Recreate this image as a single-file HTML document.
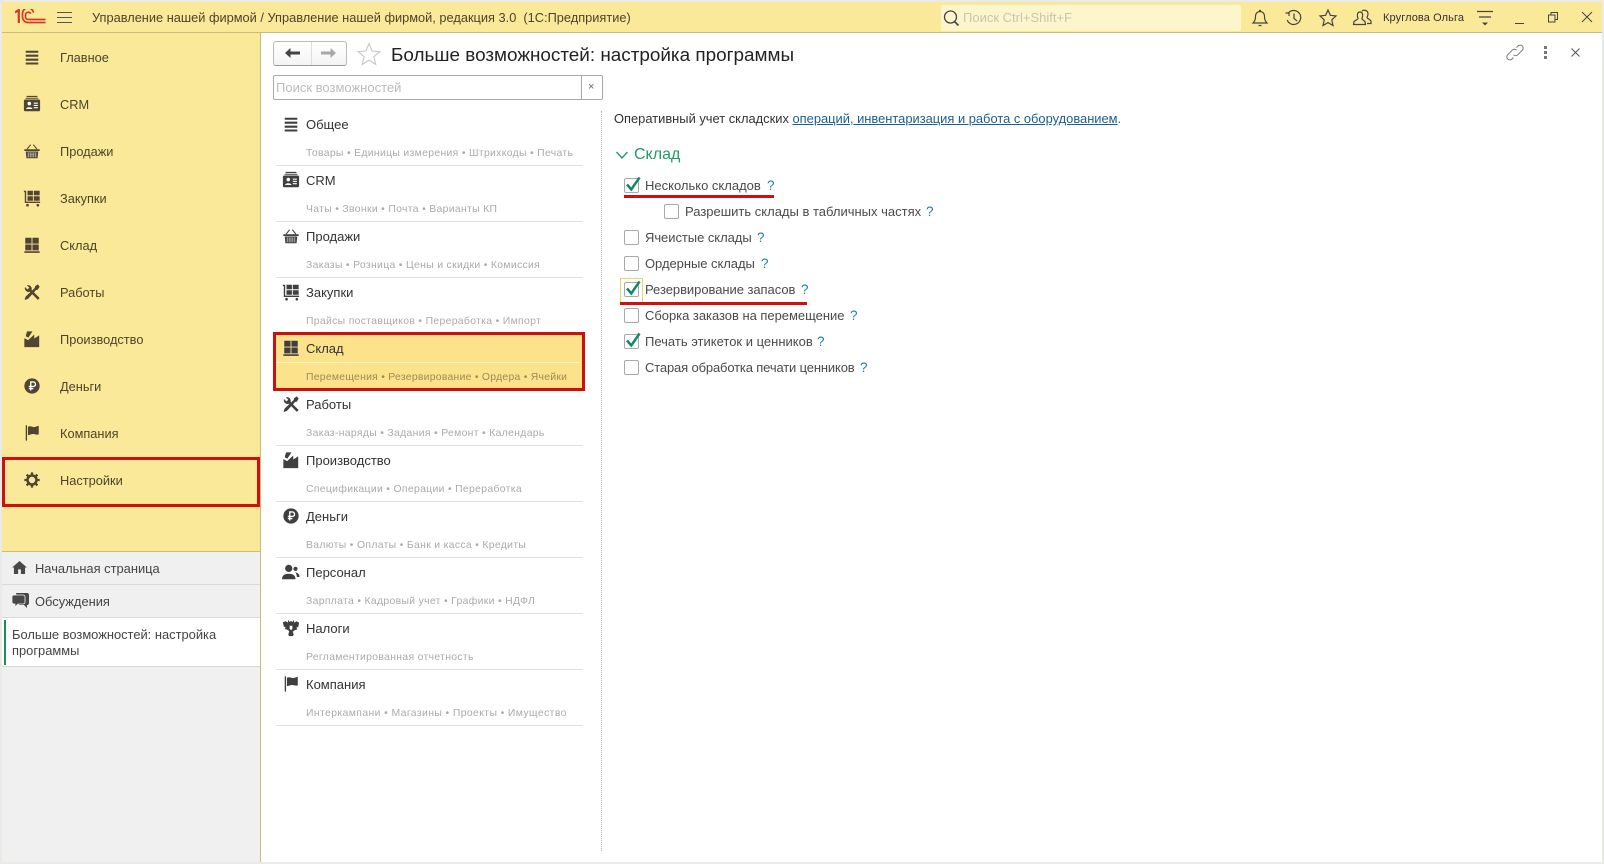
<!DOCTYPE html>
<html lang="ru"><head><meta charset="utf-8"><title>Больше возможностей: настройка программы</title>
<style>
html,body{margin:0;padding:0}
body{width:1604px;height:864px;position:relative;overflow:hidden;background:#fff;font-family:"Liberation Sans","DejaVu Sans",sans-serif;font-size:13px;color:#333;filter:blur(.3px)}
.a{position:absolute}
.t{position:absolute;line-height:0;white-space:nowrap}
svg.i{position:absolute;width:18px;height:18px;margin:1px}
.n{color:#4c4428;font-size:12.8px;left:60px}
.h{font-size:13px;color:#333;left:306px}
.s{font-size:10.4px;color:#aaa;left:306px;letter-spacing:.33px}
.sep{position:absolute;left:276px;width:307px;height:1px;background:#e2e2e2}
.c{position:absolute;left:624px;width:13px;height:13px;border:1px solid #a9a9a9;border-radius:2px;background:#fff}
.l{font-size:13px;color:#4a4a4a;left:645px}
.q{font-size:13.5px;color:#1c7fa6}
</style></head><body>
<svg width="0" height="0" style="position:absolute"><defs>
<symbol id="menu" viewBox="0 0 20 20"><path d="M3 3h14v2.300H3zM3 7.400h14v2.300H3zM3 11.800h14v2.300H3zM3 16.100h14v2.300H3z" fill="currentColor"/></symbol>
<symbol id="crm" viewBox="0 0 20 20"><path d="M4 1h12v1.200H4zM3 3h14v1.200H3z" fill="currentColor"/><path d="M2.500 5h15a1.500 1.500 0 0 1 1.500 1.500v10a1.500 1.500 0 0 1-1.500 1.500h-15A1.500 1.500 0 0 1 1 16.500v-10A1.500 1.500 0 0 1 2.500 5z" fill="currentColor"/><circle cx="7" cy="9.500" r="2" fill="#fff"/><path d="M3.500 15.500c.3-2.500 6.700-2.500 7 0zM12 8.500h4.500v1.200H12zM12 11h4.500v1.200H12zM12 13.500h4.500v1.200H12z" fill="#fff"/></symbol>
<symbol id="cart" viewBox="0 0 20 20"><path d="M1.500 8h17v2h-17zM3 10.500h14l-.8 7.500H3.800z" fill="currentColor"/><path d="M4.500 8l4-5M15.500 8l-4-5" stroke="currentColor" stroke-width="1.200" fill="none"/><path d="M5.800 11.500v5.500M8 11.500v5.500M10 11.500v5.500M12 11.500v5.500M14.200 11.500v5.500" stroke="#fff" stroke-width=".9" fill="none" opacity=".75"/></symbol>
<symbol id="buy" viewBox="0 0 20 20"><path d="M1 2h2.500v12h15.500v1.600H2V3.500H1z" fill="currentColor"/><path d="M5 2h6v5H5zM12 2h6.500v5H12zM5 8h6v5H5zM12 8h6.500v5H12z" fill="currentColor"/><circle cx="5" cy="18" r="1.500" fill="currentColor"/><circle cx="16.500" cy="18" r="1.500" fill="currentColor"/></symbol>
<symbol id="wh" viewBox="0 0 20 20"><path d="M2.500 2h7v6.500h-7zM10.500 2h7v6.500h-7zM2.500 9.500h7V16h-7zM10.500 9.500h7V16h-7zM1.500 17h17v1.800h-17z" fill="currentColor"/></symbol>
<symbol id="work" viewBox="0 0 20 20"><path d="M2.200 4.500L5 7.200 7 5.200 4.300 2.500A4.200 4.200 0 0 1 9.500 7.800L18.500 16.700 16.500 18.700 7.600 9.700A4.200 4.200 0 0 1 2.200 4.500z" fill="currentColor"/><path d="M18.500 4l-2-2.500-3 2-.5 2L3 15l-1.200 3 .7.800 3-1.200 9-9.800 2-.5z" fill="currentColor"/></symbol>
<symbol id="prod" viewBox="0 0 20 20"><path d="M4.500 1.500h6l-4.500 7L3 7z" fill="currentColor"/><path d="M1.500 9l4.200 2.200L12.500 5v4.500L18 6v13H1.500z" fill="currentColor"/></symbol>
<symbol id="rub" viewBox="0 0 20 20"><circle cx="10" cy="10" r="8.500" fill="currentColor"/><path d="M8.600 15V5.500h2.800a2.400 2.400 0 0 1 0 5H6.500M6.500 12.800h5" stroke="#fff" stroke-width="1.500" fill="none"/></symbol>
<symbol id="flag" viewBox="0 0 20 20"><path d="M3 1.500h1.500v17H3z" fill="currentColor"/><path d="M5.500 3c3-1.500 5 .8 7.500.4L17.500 2v9.500c-3 1-5-.8-7.500-.2L5.500 12.500z" fill="currentColor"/></symbol>
<symbol id="gear" viewBox="0 0 20 20"><circle cx="10" cy="10" r="5" fill="none" stroke="currentColor" stroke-width="2.800"/><path d="M10 1.500v3.500M10 15v3.500M1.500 10H5M15 10h3.500M4 4l2.500 2.500M13.500 13.500L16 16M16 4l-2.500 2.500M6.500 13.500L4 16" stroke="currentColor" stroke-width="2.600"/></symbol>
<symbol id="team" viewBox="0 0 20 20"><circle cx="7.500" cy="6" r="4" fill="currentColor"/><path d="M0 18c0-4.500 3.500-6 7.500-6s7.500 1.500 7.500 6z" fill="currentColor"/><circle cx="15" cy="6.500" r="2.300" fill="currentColor"/><path d="M15 10.500c2.500 0 4.500 2 4.500 5h-3c0-2-.6-3.500-1.500-5z" fill="currentColor"/></symbol>
<symbol id="tax" viewBox="0 0 20 20"><path d="M7 1l1.500 2.500L10 2l1.500 1.500L13 1l.5 3L16 2.500l3 1.500-1 5-2 .5 1 2-3 1-2 1.500 1 3.500-1 1.500H8l-1-1.500L8 13.500 6 12l-3-1 1-2-2-.5-1-5 3-1L6.500 4z" fill="currentColor"/><path d="M8.500 7.500h3v3.500L10 12.500 8.500 11z" fill="#fff"/></symbol>
<symbol id="tick" viewBox="0 0 18 18"><path d="M3 8.500l4.300 5L15.500 1.500" fill="none" stroke="#12876a" stroke-width="2.500"/></symbol>
</defs></svg>

<!-- outer frame -->
<div class="a" style="left:0;top:0;width:1604px;height:864px;background:#e8ebe6"></div>
<div class="a" style="left:2px;top:2px;width:1600px;height:860px;background:#fff"></div>

<!-- top bar -->
<div class="a" style="left:2px;top:2px;width:1600px;height:30px;background:#fbe99a;border-bottom:1px solid #c9bb7a"></div>
<svg class="a" style="left:15px;top:9px" width="31" height="15" viewBox="0 0 31 15"><path d="M0 3.500L3.800 1V14" fill="none" stroke="#d4362a" stroke-width="2.200"/><path d="M18.500 3.600A5.500 5.500 0 0 0 7.500 5.500V8A5.500 5.500 0 0 0 13 13.500H30.500" fill="none" stroke="#d4362a" stroke-width="1.700"/><path d="M15.800 4.800A2.800 2.800 0 0 0 10.500 6V7.700A2.800 2.800 0 0 0 13.300 10.500H30.500" fill="none" stroke="#d4362a" stroke-width="1.700"/></svg>
<svg class="a" style="left:57px;top:12px" width="15" height="12" viewBox="0 0 15 12"><path d="M0 .5h15M0 5.500h15M0 10.500h15" stroke="#555" stroke-width="1"/></svg>
<div class="t" style="left:92px;top:18px;font-size:12.8px;color:#4c4428">Управление нашей фирмой / Управление нашей фирмой, редакция 3.0&nbsp; (1С:Предприятие)</div>
<div class="a" style="left:941px;top:5px;width:300px;height:26px;background:#fdf5cc;border-radius:2px"></div>
<svg class="a" style="left:942px;top:9px" width="19" height="19" viewBox="0 0 19 19"><circle cx="8.500" cy="8" r="6" fill="none" stroke="#444" stroke-width="1.300"/><path d="M12.500 12.500l4 4" stroke="#444" stroke-width="1.600"/></svg>
<div class="t" style="left:963px;top:18px;font-size:13px;color:#c9c6ae">Поиск Ctrl+Shift+F</div>
<svg class="a" style="left:1250px;top:8px" width="20" height="20" viewBox="0 0 20 20" fill="none" stroke="#444" stroke-width="1.200"><path d="M3 15h14c-2-2-2.500-3.500-2.500-7a4.500 4.500 0 0 0-9 0c0 3.500-.5 5-2.500 7zM9 2.500h2M8.500 17.500h3"/></svg>
<svg class="a" style="left:1284px;top:8px" width="20" height="20" viewBox="0 0 20 20" fill="none" stroke="#444" stroke-width="1.200"><path d="M4 5.500A7 7 0 1 1 3.200 12M1.500 5h3.500v3M10 5.500V10.500l3 2.500"/></svg>
<svg class="a" style="left:1318px;top:8px" width="20" height="20" viewBox="0 0 20 20" fill="none" stroke="#444" stroke-width="1.200"><path d="M10 2l2.400 5.300 5.600.6-4.200 3.900 1.200 5.700-5-2.900-5 2.900 1.200-5.700L2 7.900l5.600-.6z"/></svg>
<svg class="a" style="left:1352px;top:8px" width="20" height="20" viewBox="0 0 20 20" fill="none" stroke="#444" stroke-width="1.200"><path d="M6 10c-1.200-2-1-6 2-6s3.200 4 2 6c-.5 1 .5 1.800 3 3.500l.5 3H1.500l.5-3c2.500-1.700 4.500-2.500 4-3.500zM10 3.200c1-1.500 6-1.500 6 2.500 0 2-.8 3-1 4 .5 1 3.500 2 4 3.500v2.300h-4"/></svg>
<div class="t" style="left:1383px;top:18px;font-size:11px;color:#333;letter-spacing:.1px">Круглова Ольга</div>
<svg class="a" style="left:1477px;top:10px" width="16" height="17" viewBox="0 0 16 17"><path d="M0 1.500h16M2 7h12" stroke="#444" stroke-width="1.200" fill="none"/><path d="M5 12.500h6l-3 3z" fill="#444"/></svg>
<div class="a" style="left:1515px;top:23px;width:9px;height:1.300px;background:#444"></div>
<svg class="a" style="left:1547px;top:11px" width="12" height="12" viewBox="0 0 12 12" fill="none" stroke="#444"><path d="M1.500 4h6.500v7H1.500zM4 4V1.500h6.500v7H8"/></svg>
<svg class="a" style="left:1581px;top:11px" width="12" height="12" viewBox="0 0 12 12"><path d="M1 1l10 10M11 1L1 11" stroke="#444" stroke-width="1"/></svg>

<!-- sidebar -->
<div class="a" style="left:2px;top:33px;width:258px;height:518px;background:#fbe99a"></div>
<div class="a" style="left:2px;top:551px;width:258px;height:311px;background:#f0f0f0"></div>
<div class="a" style="left:260px;top:33px;width:1px;height:829px;background:#c9bb7a"></div>
<div class="a" style="left:2px;top:551px;width:258px;height:1px;background:#c9bb7a"></div>
<div class="a" style="left:2px;top:584px;width:258px;height:1px;background:#d9d9d9"></div>
<div class="a" style="left:2px;top:617px;width:258px;height:50px;background:#fff;border-top:1px solid #d9d9d9;border-bottom:1px solid #d9d9d9;box-sizing:border-box"></div>
<div class="a" style="left:4px;top:620px;width:2px;height:45px;background:#1d8a5f"></div>
<div class="a" style="left:2px;top:457px;width:258px;height:50px;box-sizing:border-box;border:3px solid #d10f0f"></div>

<svg class="i" style="left:22px;top:47px;color:#4f4532"><use href="#menu"/></svg><div class="t n" style="top:58px">Главное</div>
<svg class="i" style="left:22px;top:94px;color:#4f4532"><use href="#crm"/></svg><div class="t n" style="top:105px">CRM</div>
<svg class="i" style="left:22px;top:141px;color:#4f4532"><use href="#cart"/></svg><div class="t n" style="top:152px">Продажи</div>
<svg class="i" style="left:22px;top:188px;color:#4f4532"><use href="#buy"/></svg><div class="t n" style="top:199px">Закупки</div>
<svg class="i" style="left:22px;top:235px;color:#4f4532"><use href="#wh"/></svg><div class="t n" style="top:246px">Склад</div>
<svg class="i" style="left:22px;top:282px;color:#4f4532"><use href="#work"/></svg><div class="t n" style="top:293px">Работы</div>
<svg class="i" style="left:22px;top:329px;color:#4f4532"><use href="#prod"/></svg><div class="t n" style="top:340px">Производство</div>
<svg class="i" style="left:22px;top:376px;color:#4f4532"><use href="#rub"/></svg><div class="t n" style="top:387px">Деньги</div>
<svg class="i" style="left:22px;top:423px;color:#4f4532"><use href="#flag"/></svg><div class="t n" style="top:434px">Компания</div>
<svg class="i" style="left:22px;top:470px;color:#4f4532"><use href="#gear"/></svg><div class="t n" style="top:481px">Настройки</div>

<svg class="a" style="left:12px;top:561px" width="15" height="13" viewBox="0 0 16 14"><path d="M8 0l8 7h-2v7H9.500V9h-3v5H2V7H0z" fill="#484848"/></svg>
<div class="t" style="left:35px;top:569px;font-size:12.9px;color:#444">Начальная страница</div>
<svg class="a" style="left:12px;top:593px" width="17" height="16" viewBox="0 0 17 16"><path d="M4 0h11a2 2 0 0 1 2 2v8a2 2 0 0 1-2 2v3l-3-3H7z" fill="#484848"/><path d="M2 2h9a2 2 0 0 1 2 2v5a2 2 0 0 1-2 2H6l-3 3v-3H2a2 2 0 0 1-2-2V4a2 2 0 0 1 2-2z" fill="#484848" stroke="#f0f0f0" stroke-width=".8"/></svg>
<div class="t" style="left:35px;top:602px;font-size:12.9px;color:#444">Обсуждения</div>
<div class="t" style="left:12px;top:635px;font-size:12.9px;color:#444">Больше возможностей: настройка</div>
<div class="t" style="left:12px;top:651px;font-size:12.9px;color:#444">программы</div>

<!-- header of form -->
<div class="a" style="left:273px;top:41px;width:72px;height:23px;border:1px solid #bbb;border-bottom-color:#999;border-radius:3px;background:linear-gradient(#fff,#f4f4f4)"></div>
<div class="a" style="left:311px;top:42px;width:1px;height:23px;background:#ddd"></div>
<svg class="a" style="left:285px;top:47px" width="15" height="12" viewBox="0 0 15 12"><path d="M0 6l5.500-5v3.500H15v3H5.500V11z" fill="#444"/></svg>
<svg class="a" style="left:321px;top:47px" width="15" height="12" viewBox="0 0 15 12"><path d="M15 6L9.500 1v3.500H0v3h9.500V11z" fill="#a8a8a8"/></svg>
<svg class="a" style="left:357px;top:42px" width="24" height="24" viewBox="0 0 24 24"><path d="M12 1.500l3 7.500 8 .6-6.200 5.100 2 7.800-6.800-4.300-6.800 4.300 2-7.800L1 9.600 9 9z" fill="#fff" stroke="#c8c8c8" stroke-width="1.100"/></svg>
<div class="t" style="left:391px;top:55.500px;font-size:18.900px;color:#222">Больше возможностей: настройка программы</div>
<svg class="a" style="left:1506px;top:44px" width="18" height="17" viewBox="0 0 18 17" fill="none" stroke="#777" stroke-width="1"><path d="M10.500 3.500l1.500-1.500a3 3 0 0 1 4.300 4.200l-4.500 4.600a3 3 0 0 1-4.300 0"/><path d="M7.500 13.500L6 15a3 3 0 0 1-4.300-4.200l4.500-4.600a3 3 0 0 1 4.300 0"/></svg>
<div class="a" style="left:1544px;top:46px;width:3px;height:3px;background:#777;box-shadow:0 5px 0 #777,0 10px 0 #777"></div>
<svg class="a" style="left:1571px;top:48px" width="9" height="9" viewBox="0 0 9 9"><path d="M.5.500l8 8M8.500.500l-8 8" stroke="#555"/></svg>

<!-- search -->
<div class="a" style="left:273px;top:75px;width:328px;height:23px;border:1px solid #a9a9a9;border-radius:2px;background:#fff"></div>
<div class="a" style="left:581px;top:75px;width:1px;height:25px;background:#a9a9a9"></div>
<div class="t" style="left:276px;top:88px;font-size:13px;color:#bbb">Поиск возможностей</div>
<div class="t" style="left:588px;top:87px;font-size:11px;color:#666">×</div>

<!-- list -->
<div class="a" style="left:275px;top:335px;width:307px;height:53px;background:#fde28c"></div>
<div class="a" style="left:276px;top:362px;width:304px;height:1px;background:#fff3c4"></div>
<div class="a" style="left:273px;top:332px;width:312px;height:59px;box-sizing:border-box;border:3px solid #cc1010"></div>
<div class="sep" style="top:165px"></div><div class="sep" style="top:221px"></div><div class="sep" style="top:277px"></div>
<div class="sep" style="top:445px"></div><div class="sep" style="top:501px"></div><div class="sep" style="top:557px"></div><div class="sep" style="top:613px"></div><div class="sep" style="top:669px"></div><div class="sep" style="top:725px"></div>

<svg class="i" style="left:281px;top:114px;color:#3f3f3f"><use href="#menu"/></svg><div class="t h" style="top:125px">Общее</div><div class="t s" style="top:153.500px">Товары • Единицы измерения • Штрихкоды • Печать</div>
<svg class="i" style="left:281px;top:170px;color:#3f3f3f"><use href="#crm"/></svg><div class="t h" style="top:181px">CRM</div><div class="t s" style="top:209.500px">Чаты • Звонки • Почта • Варианты КП</div>
<svg class="i" style="left:281px;top:226px;color:#3f3f3f"><use href="#cart"/></svg><div class="t h" style="top:237px">Продажи</div><div class="t s" style="top:265.500px">Заказы • Розница • Цены и скидки • Комиссия</div>
<svg class="i" style="left:281px;top:282px;color:#3f3f3f"><use href="#buy"/></svg><div class="t h" style="top:293px">Закупки</div><div class="t s" style="top:321.500px">Прайсы поставщиков • Переработка • Импорт</div>
<svg class="i" style="left:281px;top:338px;color:#3f3f3f"><use href="#wh"/></svg><div class="t h" style="top:349px">Склад</div><div class="t s" style="top:377.500px;color:#9c8a55;letter-spacing:.27px">Перемещения • Резервирование • Ордера • Ячейки</div>
<svg class="i" style="left:281px;top:394px;color:#3f3f3f"><use href="#work"/></svg><div class="t h" style="top:405px">Работы</div><div class="t s" style="top:433.500px">Заказ-наряды • Задания • Ремонт • Календарь</div>
<svg class="i" style="left:281px;top:450px;color:#3f3f3f"><use href="#prod"/></svg><div class="t h" style="top:461px">Производство</div><div class="t s" style="top:489.500px">Спецификации • Операции • Переработка</div>
<svg class="i" style="left:281px;top:506px;color:#3f3f3f"><use href="#rub"/></svg><div class="t h" style="top:517px">Деньги</div><div class="t s" style="top:545.500px">Валюты • Оплаты • Банк и касса • Кредиты</div>
<svg class="i" style="left:281px;top:562px;color:#3f3f3f"><use href="#team"/></svg><div class="t h" style="top:573px">Персонал</div><div class="t s" style="top:601.500px">Зарплата • Кадровый учет • Графики • НДФЛ</div>
<svg class="i" style="left:281px;top:618px;color:#3f3f3f"><use href="#tax"/></svg><div class="t h" style="top:629px">Налоги</div><div class="t s" style="top:657.500px">Регламентированная отчетность</div>
<svg class="i" style="left:281px;top:674px;color:#3f3f3f"><use href="#flag"/></svg><div class="t h" style="top:685px">Компания</div><div class="t s" style="top:713.500px;letter-spacing:.4px">Интеркампани • Магазины • Проекты • Имущество</div>

<!-- dotted -->
<div class="a" style="left:601px;top:111px;width:0;height:740px;border-left:1px dotted #b5b5b5"></div>

<!-- content -->
<div class="t" style="left:614px;top:119px;font-size:12.9px;color:#333">Оперативный учет складских <span style="color:#1b5e94;text-decoration:underline">операций, инвентаризация и работа с оборудованием</span><span style="color:#1b5e94">.</span></div>
<svg class="a" style="left:615px;top:151px" width="14" height="9" viewBox="0 0 14 9"><path d="M1.500 1l5.500 6 5.500-6" fill="none" stroke="#1f9a68" stroke-width="1.300"/></svg>
<div class="t" style="left:634px;top:154.500px;font-size:16px;color:#1f9a68">Склад</div>

<div class="a" style="left:620px;top:278px;width:21px;height:23px;border:1px solid #e9d46a"></div>
<div class="a" style="left:624px;top:195px;width:150px;height:2.500px;background:#d00f0f"></div>
<div class="a" style="left:620px;top:302px;width:187px;height:2.500px;background:#d00f0f"></div>

<div class="c" style="top:178px"></div><svg class="a" style="left:624px;top:176px" width="18" height="18"><use href="#tick"/></svg>
<div class="t l" style="top:186px">Несколько складов</div><div class="t q" style="left:767px;top:186px">?</div>
<div class="c" style="left:664px;top:204px"></div>
<div class="t l" style="left:685px;top:212px">Разрешить склады в табличных частях</div><div class="t q" style="left:926px;top:212px">?</div>
<div class="c" style="top:230px"></div>
<div class="t l" style="top:238px;letter-spacing:-.05px">Ячеистые склады</div><div class="t q" style="left:757px;top:238px">?</div>
<div class="c" style="top:256px"></div>
<div class="t l" style="top:264px;letter-spacing:-.05px">Ордерные склады</div><div class="t q" style="left:761px;top:264px">?</div>
<div class="c" style="top:282px"></div><svg class="a" style="left:624px;top:280px" width="18" height="18"><use href="#tick"/></svg>
<div class="t l" style="top:290px;letter-spacing:-.05px">Резервирование запасов</div><div class="t q" style="left:801px;top:290px">?</div>
<div class="c" style="top:308px"></div>
<div class="t l" style="top:316px;letter-spacing:-.03px">Сборка заказов на перемещение</div><div class="t q" style="left:850px;top:316px">?</div>
<div class="c" style="top:334px"></div><svg class="a" style="left:624px;top:332px" width="18" height="18"><use href="#tick"/></svg>
<div class="t l" style="top:342px">Печать этикеток и ценников</div><div class="t q" style="left:817px;top:342px">?</div>
<div class="c" style="top:360px"></div>
<div class="t l" style="top:368px;letter-spacing:-.15px">Старая обработка печати ценников</div><div class="t q" style="left:860px;top:368px">?</div>
</body></html>
